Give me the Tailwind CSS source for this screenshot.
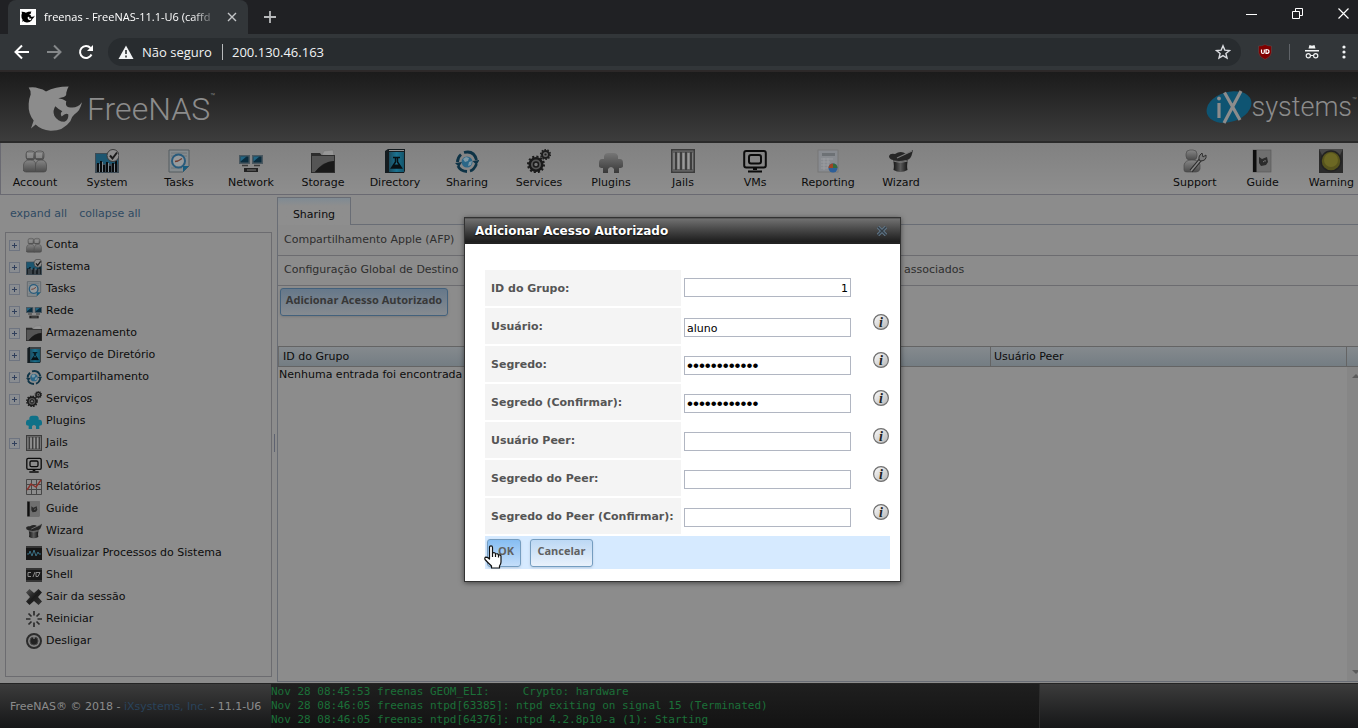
<!DOCTYPE html>
<html lang="pt-BR">
<head>
<meta charset="utf-8">
<title>freenas - FreeNAS-11.1-U6</title>
<script src="https://cdn.jsdelivr.net/npm/@tailwindcss/browser@4"></script>
</head>
<body class="h-screen overflow-hidden flex flex-col bg-[#8c8c8c] font-['DejaVu_Sans',sans-serif] text-[11px] leading-[14px] text-[#0c0c0c]">

<svg class="absolute size-0" aria-hidden="true">
  <defs>
    <linearGradient id="gs" x1="0" y1="0" x2="0" y2="1"><stop offset="0" stop-color="#868686"/><stop offset="1" stop-color="#4c4c4c"/></linearGradient>
    <linearGradient id="gd" x1="0" y1="0" x2="1" y2="1"><stop offset="0" stop-color="#555"/><stop offset=".5" stop-color="#1b1b1b"/><stop offset="1" stop-color="#333"/></linearGradient>
    <linearGradient id="gh" x1="0" y1="0" x2="1" y2="0"><stop offset="0" stop-color="#111"/><stop offset=".5" stop-color="#5a5a5a"/><stop offset="1" stop-color="#111"/></linearGradient>
    <linearGradient id="gb" x1="0" y1="0" x2="1" y2="0"><stop offset="0" stop-color="#1c4a5c"/><stop offset=".5" stop-color="#1b7290"/><stop offset="1" stop-color="#12556c"/></linearGradient>
    <linearGradient id="gi" x1="0" y1="0" x2="1" y2="1"><stop offset="0" stop-color="#fff"/><stop offset="1" stop-color="#b4b4b4"/></linearGradient>
    <linearGradient id="gp" x1="0" y1="0" x2="0" y2="1"><stop offset="0" stop-color="#767676"/><stop offset="1" stop-color="#383838"/></linearGradient>
    <symbol id="shark" viewBox="0 0 168 140">
      <path fill-rule="evenodd" d="M5 7Q22 4 36 10Q48 12 57 19Q84 4 125 4Q120 12 118 22Q119 36 104 37L94 39L107 42L118 48Q113 62 125 66Q150 72 165 51Q160 76 142 88Q134 94 130 108Q108 138 70 137Q42 134 26 118L12 130L20 106Q3 86 5 56Q6 40 11 28Q12 16 5 7ZM85 63Q76 76 82 92Q92 110 112 110Q125 106 124 88Q117 82 104 94Q98 84 106 78Q94 72 85 63Z"/>
    </symbol>
    <symbol id="account" viewBox="0 0 24 24">
      <g fill="url(#gs)" stroke="#4c4c4c" stroke-width=".7"><rect x="3" y="2" width="9" height="9" rx="3"/><rect x="12" y="2" width="9" height="9" rx="3"/><path d="M.5 22V16Q1 11 7 11T12.500 16V23H3Q.5 23 .5 21Z"/><path d="M12.500 23V16Q13 11 18 11T23.500 16V20Q23.500 23 21 23Z"/></g>
      <path d="M4 4h6v5H4zM13 4h6v5h-6z" fill="#a0a0a0" opacity=".6"/>
    </symbol>
    <symbol id="system" viewBox="0 0 24 24">
      <rect y="4" width="24" height="20" fill="#3e4b54"/><rect x="1" y="5" width="22" height="10" fill="#1c5670"/>
      <path d="M2 23V14h2v9M5 23V12h2v11M8 23V16h2v7M11 23V13h2v10M14 23V17h2v6M17 23V14h2v9M20 23V12h2v11" fill="#090c0e"/>
      <path d="M4 23V15h1v8M7 23V13h1v10M13 23V14h1v9M19 23V15h1v8" fill="#7b8790"/>
      <circle cx="18" cy="6.500" r="6" fill="#8d8d8d" stroke="#3a3a3a"/><path d="M15 6.500l2.500 3L22 3.500" fill="none" stroke="#1b1b1b" stroke-width="2"/>
    </symbol>
    <symbol id="tasks" viewBox="0 0 24 24">
      <path d="M2 1h20v16l-6 6H2z" fill="#858b8e" stroke="#555c60"/><path d="M4 4h16M4 7h16M4 19h11" stroke="#6d7478"/>
      <circle cx="11.500" cy="12" r="6.500" fill="#969a9c" stroke="#295b7c" stroke-width="2"/><path d="M11 12l4-2.500M11 12l-3 .5" stroke="#703c30" stroke-width="1.400"/><path d="M16 23v-6h6z" fill="#165d80"/>
    </symbol>
    <symbol id="network" viewBox="0 0 24 24">
      <path d="M0 6h11v9H0zM13 6h11v9H13z" fill="#4b5860"/><path d="M1.500 7.500h8v6h-8zM14.500 7.500h8v6h-8z" fill="#0a2c3e"/><path d="M1.500 7.500h6l-6 5zM14.500 7.500h6l-6 5z" fill="#226482"/>
      <path d="M3 16.500h6M15 16.500h6" stroke="#3a3a3a" stroke-width="1.500"/><rect x="5" y="19" width="14" height="4" fill="#222"/><path d="M8 21h9" stroke="#777"/>
    </symbol>
    <symbol id="storage" viewBox="0 0 24 24">
      <path d="M11 6L13 2l9-1 1 6z" fill="#979797" stroke="#777" stroke-width=".5"/><path d="M0 4h9l1.500 2H24v18H0z" fill="#2d2d2d"/><path d="M1 7h22v5Q12 12 4 23H1z" fill="#555"/><path d="M4 23Q12 13 23 12v11z" fill="#191919"/>
    </symbol>
    <symbol id="directory" viewBox="0 0 24 24">
      <path d="M2 2L5 0h17v22l-1 2H2z" fill="#141c20"/><rect x="6" y="3" width="15" height="20" fill="url(#gb)"/><path d="M6 1.500h15" stroke="#8f8f8f"/>
      <path d="M10 8.500h7M12.500 9v4l-4 6h10l-4-6V9" fill="none" stroke="#071014" stroke-width="1.500"/><path d="M11 15.500h5l2 3.500H9z" fill="#071014"/>
    </symbol>
    <symbol id="sharing" viewBox="0 0 24 24">
      <circle cx="12" cy="13" r="5.500" fill="#2b6788"/><path d="M8 10l3-2 3 1-1 3-3 1zM14 13l3-1-1 4-3 1z" fill="#7c98a6"/>
      <path d="M2.500 13A10 10 0 0 1 6 5.500M9 3.500Q19 1 21.500 11M21.500 15Q19 21 15 22M12 22.500Q5 22 3 17" fill="none" stroke="#0e3346" stroke-width="2.800"/><path d="M0 14l7-1-3 5zM24.500 11l-7 1 4 4z" fill="#0e3346"/>
    </symbol>
    <symbol id="services" viewBox="0 0 24 24">
      <circle cx="9" cy="15.500" r="6.300" fill="#555" stroke="#1a1a1a" stroke-width="2.500"/><circle cx="9" cy="15.500" r="8" fill="none" stroke="#1a1a1a" stroke-width="2" stroke-dasharray="2.100 2.100"/><circle cx="9" cy="15.500" r="2.500" fill="#777" stroke="#1a1a1a" stroke-width="1.500"/>
      <circle cx="18.500" cy="5.500" r="3.500" fill="#666" stroke="#1e1e1e" stroke-width="2"/><circle cx="18.500" cy="5.500" r="4.800" fill="none" stroke="#1e1e1e" stroke-width="1.600" stroke-dasharray="1.500 1.500"/><circle cx="18.500" cy="5.500" r="1.100" fill="#1e1e1e"/>
    </symbol>
    <symbol id="plugins" viewBox="0 0 24 24">
      <path d="M5 10V7Q6 4 9 4h6q3 0 4 3v3h2q3 0 3 4v3q0 2-4 2v5h-5v-4q-3-4-6 0v4H4v-5q-4 0-4-2v-3q0-4 3-4z" fill="currentColor"/>
    </symbol>
    <symbol id="plugins-gray" viewBox="0 0 24 24">
      <path d="M5 10V7Q6 4 9 4h6q3 0 4 3v3h2q3 0 3 4v3q0 2-4 2v5h-5v-4q-3-4-6 0v4H4v-5q-4 0-4-2v-3q0-4 3-4z" fill="url(#gp)"/>
    </symbol>
    <symbol id="jails" viewBox="0 0 24 24">
      <rect x=".8" y=".8" width="22.400" height="22.400" fill="#7c7c7c" stroke="#3c3c3c" stroke-width="1.600"/><path d="M2 3h20M2 21h20" stroke="#555" stroke-width="1.500"/>
      <path d="M5 3v18M10 3v18M15 3v18M20 3v18" stroke="#3e3e3e" stroke-width="2"/><path d="M7.500 4v16M12.500 4v16M17.500 4v16" stroke="#9a9a9a" stroke-width="1.500"/>
    </symbol>
    <symbol id="vms" viewBox="0 0 24 24">
      <g fill="none" stroke="#0b0b0b" stroke-width="2"><rect x="1.200" y="2" width="21.600" height="16.500" rx="2"/><rect x="6" y="6" width="12" height="8.500" rx="2"/><path d="M10 20h4M5 22.500h14"/></g>
    </symbol>
    <symbol id="reporting" viewBox="0 0 24 24">
      <rect x="2" y="1" width="20" height="22" fill="#888b90" stroke="#777"/><rect x="6" y="4" width="13" height="3" fill="#6d7175"/><path d="M5 10h12M5 13h9M5 16h8M5 19h7M8 9v12M12 9v10" stroke="#9a9ca0"/>
      <circle cx="17" cy="19" r="4.500" fill="#2d5f99"/><path d="M17 19v-4.500a4.500 4.500 0 0 1 4.500 4.500z" fill="#356b3b"/><path d="M17 19h-4.500a4.500 4.500 0 0 1 4.500-4.500z" fill="#9e4424"/>
    </symbol>
    <symbol id="wizard" viewBox="0 0 24 24">
      <path d="M0 7Q1 4 6 5Q12 1 17 5l7-4-1 4q-1 5-5 6-9 2-14 0Q0 10 0 7z" fill="#262626"/><path d="M4 11q1.500 5 .5 10 7 4 14 0-1-5 .5-10-7 3-15 0z" fill="url(#gh)"/><path d="M4 12q7 3 15 0" stroke="#777" fill="none"/><path d="M8 9L23 2" stroke="#7a7a7a" stroke-width="1.200"/>
    </symbol>
    <symbol id="support" viewBox="0 0 24 24">
      <g fill="url(#gs)" stroke="#4a4a4a" stroke-width=".7"><rect x="3" y="1" width="11" height="10" rx="4"/><path d="M1 21v-5q1-5 8-5t8 5v4q-1 3-4 3H4q-3 0-3-2z"/></g>
      <path d="M8 22L18 10" stroke="#2b2b2b" stroke-width="3.600"/><path d="M8 22L18 10" stroke="#888" stroke-width="1.600"/><path d="M17 12q-3-4 2-8l1 4 3-2q1 6-6 6z" fill="#777" stroke="#2e2e2e"/>
    </symbol>
    <symbol id="guide" viewBox="0 0 24 24">
      <rect x="2" y="1" width="18" height="22" fill="#6f6f6f" stroke="#555" stroke-width=".6"/><rect x="2" y="1" width="3.500" height="22" fill="#0e0e0e"/><path d="M8 8l3 2 5-2 1 5-2 3-5 1-2-3z" fill="#2b2b2b"/><path d="M12 13q2-2 3-1" stroke="#777" fill="none"/>
    </symbol>
    <symbol id="warning" viewBox="0 0 24 24">
      <rect width="24" height="24" fill="#2b2b2b"/><path d="M0 0h24L20 8H4z" fill="#484848"/><circle cx="12" cy="12" r="10" fill="#57541d" stroke="#222" stroke-width="1.500"/><circle cx="12" cy="11" r="7" fill="#6c6824"/>
    </symbol>
    <symbol id="chart" viewBox="0 0 16 16">
      <path d="M.5.500h15v15H.5zM5.500 0v16M10.500 0v16M0 5.500h16M0 10.500h16" fill="none" stroke="#474747"/><path d="M1 11l4-6 5 3 5-7" fill="none" stroke="#8b322b" stroke-width="1.400"/>
    </symbol>
    <symbol id="process" viewBox="0 0 16 16">
      <rect y="1" width="16" height="14" fill="#161616"/><path d="M0 2h16" stroke="#555"/><path d="M1 9h2l1-3 2 5 2-6 2 6 2-4 1 2h2" fill="none" stroke="#3b6f83"/>
    </symbol>
    <symbol id="shell" viewBox="0 0 16 16">
      <rect y="1" width="16" height="14" fill="#191919"/><path d="M0 2h16M0 14h16" stroke="#555"/><path d="M5 5.500H2v4h3M7 10l2-5M10 5.500h4l-2 4h-2z" fill="none" stroke="#8c8c8c"/>
    </symbol>
    <symbol id="logout" viewBox="0 0 16 16"><path d="M3.500 0L8 4 12.500 0 16 3.500 12 8 16 12.500 12.500 16 8 12 3.500 16 0 12.500 4 8 0 3.500z" fill="url(#gd)"/></symbol>
    <symbol id="reboot" viewBox="0 0 16 16"><path d="M8 0v4.500M8 11.500V16M0 8h4.500M11.500 8H16M2.500 2.500l3 3M10.500 10.500l3 3M2.500 13.500l3-3M10.500 5.500l3-3" stroke="#2c2c2c" stroke-width="1.700"/></symbol>
    <symbol id="shutdown" viewBox="0 0 16 16"><circle cx="8" cy="8" r="7" fill="#808080" stroke="#2c2c2c" stroke-width="2"/><circle cx="8" cy="8" r="4" fill="#222" stroke="#444"/><path d="M8 3v3" stroke="#999"/></symbol>
    <symbol id="info" viewBox="0 0 16 16"><circle cx="8" cy="8" r="7.400" fill="url(#gi)" stroke="#707070" stroke-width="1.200"/><text x="8" y="12.500" text-anchor="middle" font-family="Liberation Serif, serif" font-weight="bold" font-style="italic" font-size="14" fill="#222">i</text></symbol>
    <symbol id="plus" viewBox="0 0 11 11"><rect x=".5" y=".5" width="10" height="10" fill="#8a8d91" stroke="#6e7480"/><path d="M3 5.500h5M5.500 3v5" stroke="#303f5b"/></symbol>
  </defs>
</svg>

<!-- Browser window frame -->
<div class="shrink-0 h-[34px] bg-[#202124] flex items-start pl-2 font-['Open_Sans',sans-serif] text-white">
  <div class="w-60 h-[34px] bg-[#323639] rounded-t-lg flex items-center pl-3 pr-2.5">
    <svg class="size-4 bg-white p-px shrink-0" fill="#000"><use href="#shark"/></svg>
    <span class="ml-2 flex-1 overflow-hidden whitespace-nowrap text-[11px] mask-r-from-85%">freenas - FreeNAS-11.1-U6 (caffd</span>
    <button aria-label="Fechar guia" class="ml-2 size-3"><svg viewBox="0 0 12 12" class="size-3" stroke="#c4c6c8" stroke-width="1.400"><path d="M2 2l8 8M10 2l-8 8"/></svg></button>
  </div>
  <button aria-label="Nova guia" class="ml-4 mt-[11px] size-3"><svg viewBox="0 0 12 12" class="size-3" stroke="#b8babc" stroke-width="1.800"><path d="M6 0v12M0 6h12"/></svg></button>
  <div class="ml-auto flex gap-[35px] mt-2 pr-[9px]">
    <button aria-label="Minimizar" class="size-[11px]"><svg viewBox="0 0 11 11" class="size-[11px]" stroke="#fff"><path d="M0 6.500h11"/></svg></button>
    <button aria-label="Restaurar" class="size-[11px]"><svg viewBox="0 0 11 11" class="size-[11px]" stroke="#fff" fill="none"><path d="M.5 3.500h7v7h-7zM3.500 3V.5h7v7H8"/></svg></button>
    <button aria-label="Fechar" class="size-[11px]"><svg viewBox="0 0 11 11" class="size-[11px]" stroke="#fff" stroke-width="1.200"><path d="M.5.500l10 10M10.500.500l-10 10"/></svg></button>
  </div>
</div>
<div class="shrink-0 h-9 bg-[#323639] flex items-center pl-3.5 font-['Open_Sans',sans-serif] text-[13px] leading-5 text-[#f1f3f4]">
  <button aria-label="Voltar" class="size-4"><svg viewBox="0 0 16 16" class="size-4" fill="none" stroke="#fff" stroke-width="2"><path d="M15 8H2M8 1.500L1.500 8 8 14.500"/></svg></button>
  <button aria-label="Avançar" class="size-4 ml-4"><svg viewBox="0 0 16 16" class="size-4" fill="none" stroke="#85888a" stroke-width="2"><path d="M1 8h13M8 1.500L14.500 8 8 14.500"/></svg></button>
  <button aria-label="Recarregar" class="size-4 ml-4"><svg viewBox="0 0 16 16" class="size-4" fill="none" stroke="#fff" stroke-width="2"><path d="M13.500 10.500A6 6 0 1 1 12.500 4"/><path d="M15 1v6H9z" fill="#fff" stroke="none"/></svg></button>
  <div class="ml-3.5 flex-1 h-7 rounded-full bg-[#282c2f] flex items-center pl-2.5 pr-2.5">
    <svg viewBox="0 0 16 16" class="size-4"><path d="M8 1.500L15.500 15H.5z" fill="#f1f3f4"/><path d="M8 6v4M8 11.500v2" stroke="#282c2f" stroke-width="1.600"/></svg>
    <span class="ml-2 w-[72px] whitespace-nowrap">Não seguro</span>
    <span class="ml-2 h-4 w-px bg-[#b8babc]"></span>
    <input aria-label="Endereço" class="ml-[9px] flex-1 bg-transparent outline-none" value="200.130.46.163">
    <svg viewBox="0 0 16 16" class="size-4" fill="none" stroke="#dadce0" stroke-width="1.400"><path d="M8 1.800l1.800 4.300 4.700.4-3.600 3 1.100 4.500L8 11.600 4 14l1.100-4.500-3.600-3 4.700-.4z"/></svg>
  </div>
  <svg viewBox="0 0 16 16" class="ml-4 size-4"><path d="M8 .5Q11 2 14.500 2v6.500Q14 13 8 15.500 2 13 1.500 8.500V2Q5 2 8 .5z" fill="#800000" stroke="#555" stroke-width=".5"/><path d="M4.500 5.500V8q0 1.500 1.400 1.500T7.300 8V5.500M9 5.500V9.500q3 0 3-2t-3-2z" fill="none" stroke="#fff" stroke-width="1.200"/></svg>
  <span class="ml-4 h-4 w-px bg-[#5f6368]"></span>
  <svg viewBox="0 0 16 16" class="ml-3.5 size-4"><path d="M4.500 4.500L5.500 1 8 1.800 10.500 1l1 3.500zM1 6h14v1.400H1z" fill="#f1f3f4"/><path d="M6.300 11.500h3.400" stroke="#f1f3f4"/><g fill="none" stroke="#f1f3f4" stroke-width="1.200"><circle cx="4.300" cy="11.800" r="2.100"/><circle cx="11.700" cy="11.800" r="2.100"/></g></svg>
  <svg viewBox="0 0 16 16" class="ml-4 mr-[6px] size-4" fill="#f1f3f4"><circle cx="8" cy="3" r="1.600"/><circle cx="8" cy="8" r="1.600"/><circle cx="8" cy="13" r="1.600"/></svg>
</div>

<div class="relative flex-1 min-h-0 flex flex-col border-t-2 border-[#2c2828]">
  <!-- Product banner -->
  <header class="shrink-0 h-[71px] flex items-center justify-between pl-[27px] pr-px bg-linear-to-b from-[#1b1b1b] to-[#3d3d3d] border-b-2 border-b-[#2a2a2a] font-['Roboto',sans-serif] font-light text-[#8c8c8c]">
    <div class="flex items-center">
      <svg class="w-14 h-[47px] mt-1" fill="#8c8c8c"><use href="#shark"/></svg>
      <span class="ml-1 mt-1 text-[32px] leading-9">FreeNAS</span><sup class="text-[8px] leading-3 -mt-3">™</sup>
    </div>
    <div class="flex items-center">
      <svg viewBox="0 0 46 36" class="w-[46px] h-9"><ellipse cx="23" cy="18" rx="23" ry="15" transform="rotate(-17 23 18)" fill="#0e5472"/><path d="M13 14V29M18.500 3.500L34 31M35 2L18 34" fill="none" stroke="#8c8c8c" stroke-width="3.200"/><circle cx="13" cy="9.500" r="1.900" fill="#8c8c8c"/></svg>
      <span class="text-[27px] leading-9">systems</span><sup class="text-[8px] leading-3 -mt-1">™</sup>
    </div>
  </header>

  <!-- Main toolbar -->
  <nav class="shrink-0 h-[52px] flex justify-between border-l border-b border-[#6a6a72] bg-linear-to-b from-[#818181] to-[#8e8e8e] pt-1.5 pr-1">
    <div class="flex -ml-0.5 *:flex *:flex-col *:items-center *:gap-[3px] *:w-18">
      <a href="#"><svg class="size-6"><use href="#account"/></svg>Account</a>
      <a href="#"><svg class="size-6"><use href="#system"/></svg>System</a>
      <a href="#"><svg class="size-6"><use href="#tasks"/></svg>Tasks</a>
      <a href="#"><svg class="size-6"><use href="#network"/></svg>Network</a>
      <a href="#"><svg class="size-6"><use href="#storage"/></svg>Storage</a>
      <a href="#"><svg class="size-6"><use href="#directory"/></svg>Directory</a>
      <a href="#"><svg class="size-6"><use href="#sharing"/></svg>Sharing</a>
      <a href="#"><svg class="size-6"><use href="#services"/></svg>Services</a>
      <a href="#"><svg class="size-6"><use href="#plugins-gray"/></svg>Plugins</a>
      <a href="#"><svg class="size-6"><use href="#jails"/></svg>Jails</a>
      <a href="#"><svg class="size-6"><use href="#vms"/></svg>VMs</a>
      <a href="#" class="mx-px"><svg class="size-6"><use href="#reporting"/></svg>Reporting</a>
      <a href="#"><svg class="size-6"><use href="#wizard"/></svg>Wizard</a>
    </div>
    <div class="flex gap-[30px] *:flex *:flex-col *:items-center *:gap-[3px]">
      <a href="#"><svg class="size-6"><use href="#support"/></svg>Support</a>
      <a href="#"><svg class="size-6"><use href="#guide"/></svg>Guide</a>
      <a href="#"><svg class="size-6"><use href="#warning"/></svg>Warning</a>
    </div>
  </nav>

  <div class="flex-1 min-h-0 flex">
    <!-- Navigation tree -->
    <aside class="w-[272px] shrink-0 flex flex-col pl-[5px] pb-1.5">
      <div class="pl-[5px] pt-3 pb-[11px] flex gap-3 text-[#2f4a62]"><a href="#">expand all</a><a href="#">collapse all</a></div>
      <ul class="flex-1 border border-[#6c6c70] *:flex *:items-center *:h-[22px] *:pl-[3px] *:pt-0.5">
        <li><button aria-label="Expandir Conta" class="size-[11px] mr-1.5"><svg class="size-[11px]"><use href="#plus"/></svg></button><svg class="size-4 mr-1"><use href="#account"/></svg>Conta</li>
        <li><button aria-label="Expandir Sistema" class="size-[11px] mr-1.5"><svg class="size-[11px]"><use href="#plus"/></svg></button><svg class="size-4 mr-1"><use href="#system"/></svg>Sistema</li>
        <li><button aria-label="Expandir Tasks" class="size-[11px] mr-1.5"><svg class="size-[11px]"><use href="#plus"/></svg></button><svg class="size-4 mr-1"><use href="#tasks"/></svg>Tasks</li>
        <li><button aria-label="Expandir Rede" class="size-[11px] mr-1.5"><svg class="size-[11px]"><use href="#plus"/></svg></button><svg class="size-4 mr-1"><use href="#network"/></svg>Rede</li>
        <li><button aria-label="Expandir Armazenamento" class="size-[11px] mr-1.5"><svg class="size-[11px]"><use href="#plus"/></svg></button><svg class="size-4 mr-1"><use href="#storage"/></svg>Armazenamento</li>
        <li><button aria-label="Expandir Serviço de Diretório" class="size-[11px] mr-1.5"><svg class="size-[11px]"><use href="#plus"/></svg></button><svg class="size-4 mr-1"><use href="#directory"/></svg>Serviço de Diretório</li>
        <li><button aria-label="Expandir Compartilhamento" class="size-[11px] mr-1.5"><svg class="size-[11px]"><use href="#plus"/></svg></button><svg class="size-4 mr-1"><use href="#sharing"/></svg>Compartilhamento</li>
        <li><button aria-label="Expandir Serviços" class="size-[11px] mr-1.5"><svg class="size-[11px]"><use href="#plus"/></svg></button><svg class="size-4 mr-1"><use href="#services"/></svg>Serviços</li>
        <li><svg class="size-4 mr-1 ml-[17px] text-[#0f7188]"><use href="#plugins"/></svg>Plugins</li>
        <li><button aria-label="Expandir Jails" class="size-[11px] mr-1.5"><svg class="size-[11px]"><use href="#plus"/></svg></button><svg class="size-4 mr-1"><use href="#jails"/></svg>Jails</li>
        <li><svg class="size-4 mr-1 ml-[17px]"><use href="#vms"/></svg>VMs</li>
        <li><svg class="size-4 mr-1 ml-[17px]"><use href="#chart"/></svg>Relatórios</li>
        <li><svg class="size-4 mr-1 ml-[17px]"><use href="#guide"/></svg>Guide</li>
        <li><svg class="size-4 mr-1 ml-[17px]"><use href="#wizard"/></svg>Wizard</li>
        <li><svg class="size-4 mr-1 ml-[17px]"><use href="#process"/></svg>Visualizar Processos do Sistema</li>
        <li><svg class="size-4 mr-1 ml-[17px]"><use href="#shell"/></svg>Shell</li>
        <li><svg class="size-4 mr-1 ml-[17px]"><use href="#logout"/></svg>Sair da sessão</li>
        <li><svg class="size-4 mr-1 ml-[17px]"><use href="#reboot"/></svg>Reiniciar</li>
        <li><svg class="size-4 mr-1 ml-[17px]"><use href="#shutdown"/></svg>Desligar</li>
      </ul>
    </aside>
    <div class="w-[5px] shrink-0 flex items-center justify-center pt-2"><span class="w-px h-[18px] bg-[#5e6270]"></span></div>

    <!-- Sharing workspace -->
    <main class="flex-1 min-w-0 flex flex-col pt-0.5 pb-px">
      <div class="flex shrink-0 h-7">
        <div class="w-[74px] border border-b-0 border-[#696d75] bg-linear-to-b from-[#7f8a93] to-[#8e8e8e] to-30% text-center pt-2.5">Sharing</div>
        <div class="flex-1 border-b border-[#696d75]"></div>
      </div>
      <div class="flex-1 flex flex-col border-l border-b border-[#696d75]">
        <div class="h-[31px] shrink-0 border-b border-[#6c6c70] pl-1.5 pt-2 text-[#2e2e2e]">Compartilhamento Apple (AFP)</div>
        <div class="h-[30px] shrink-0 border-b border-[#6c6c70] pl-1.5 pt-[7px] text-[#2e2e2e] flex"><span class="w-[620px] shrink-0">Configuração Global de Destino</span><span>associados</span></div>
        <div class="shrink-0 pl-0.5 pt-0.5 h-[60px]">
          <button class="h-7 w-[168px] border border-[#43617c] rounded-[3px] bg-linear-to-b from-[#66788a] to-[#868b90] font-['Open_Sans',sans-serif] font-bold text-[11px] text-[#383838] shadow-sm pb-1 whitespace-nowrap">Adicionar Acesso Autorizado</button>
        </div>
        <div class="shrink-0 h-[21px] flex bg-linear-to-b from-[#858a8e] to-[#747d83] border-t border-b border-[#646464] leading-5">
          <div class="w-[712px] pl-1 border-l border-[#6a6a6a]">ID do Grupo</div>
          <div class="flex-1 pl-[3px] border-l border-r border-[#646464]">Usuário Peer</div>
          <div class="w-[11px]"></div>
        </div>
        <div class="flex-1 flex justify-between">
          <div class="leading-[15px] pl-px">Nenhuma entrada foi encontrada</div>
          <div class="w-[11px] bg-[#868686] flex flex-col justify-between items-end py-[7px] overflow-hidden">
            <svg viewBox="0 0 6 4" class="w-1.5 h-1"><path d="M0 4L4 0l2 2v2z" fill="#5c5c5c"/></svg>
            <svg viewBox="0 0 6 4" class="w-1.5 h-1"><path d="M0 0l4 4 2-2V0z" fill="#5c5c5c"/></svg>
          </div>
        </div>
      </div>
    </main>
  </div>

  <!-- Footer with console log -->
  <footer class="shrink-0 h-[45px] flex border-t border-[#242424] bg-linear-to-b from-[#3c3c3c] to-[#161718] text-[#8c8c8c]">
    <div class="w-[271px] shrink-0 whitespace-nowrap pl-2.5 pt-4">FreeNAS® © 2018 - <a href="#" class="text-[#29435c]">iXsystems, Inc.</a> - 11.1-U6</div>
    <pre class="w-[769px] h-full overflow-hidden bg-linear-to-b from-[#1f1f1f] to-[#131313] border-r border-[#2c2c2c] pt-px font-['DejaVu_Sans_Mono',monospace] text-[11px] leading-[14px] text-[#1b7038]">Nov 28 08:45:53 freenas GEOM_ELI:     Crypto: hardware
Nov 28 08:46:05 freenas ntpd[63385]: ntpd exiting on signal 15 (Terminated)
Nov 28 08:46:05 freenas ntpd[64376]: ntpd 4.2.8p10-a (1): Starting</pre>
  </footer>

  <!-- Dialog -->
  <section role="dialog" aria-labelledby="dlg" class="absolute left-[464px] top-[145px] w-[437px] bg-white border border-[#333] shadow-[0_1px_5px_rgba(0,0,0,0.5)]">
    <div class="h-[26px] flex items-center justify-between pl-2.5 pr-[13px] bg-linear-to-b from-[#707070] to-[#1d1d1d] border-t border-b-2 border-b-[#222] border-t-[#5a5a5a]">
      <h2 id="dlg" class="text-[12px] font-bold text-white text-shadow-[0_1px_2px_#000]">Adicionar Acesso Autorizado</h2>
      <button aria-label="Fechar diálogo" class="size-2.5"><svg viewBox="0 0 10 10" class="size-2.5" fill="none"><path d="M1 1l8 8M9 1l-8 8" stroke="#5f7688" stroke-width="3.400"/><path d="M1 1l8 8M9 1l-8 8" stroke="#333c44" stroke-width="1.400"/></svg></button>
    </div>
    <form class="pt-[26px] pl-5 pr-2.5 pb-3 text-black" onsubmit="return false">
      <div class="flex flex-col gap-0.5 *:flex *:h-9 *:pr-px">
        <div><label for="f1" class="w-[196px] mr-[3px] bg-[#f4f4f4] pl-1.5 leading-[37px] font-bold text-[#555] whitespace-nowrap">ID do Grupo:</label><input id="f1" value="1" class="mt-2 w-[167px] h-[19px] border border-[#b1b6c2] px-0.5 pt-px text-right outline-none"></div>
        <div><label for="f2" class="w-[196px] mr-[3px] bg-[#f4f4f4] pl-1.5 leading-[37px] font-bold text-[#555] whitespace-nowrap">Usuário:</label><input id="f2" value="aluno" class="mt-2.5 w-[167px] h-[19px] border border-[#b1b6c2] px-0.5 pt-px outline-none"><svg class="size-4 mt-1.5 ml-auto"><use href="#info"/></svg></div>
        <div><label for="f3" class="w-[196px] mr-[3px] bg-[#f4f4f4] pl-1.5 leading-[37px] font-bold text-[#555] whitespace-nowrap">Segredo:</label><input id="f3" type="password" value="senha1234567" class="mt-2.5 w-[167px] h-[19px] border border-[#b1b6c2] px-0.5 font-['Liberation_Sans',sans-serif] text-[17px] outline-none"><svg class="size-4 mt-1.5 ml-auto"><use href="#info"/></svg></div>
        <div><label for="f4" class="w-[196px] mr-[3px] bg-[#f4f4f4] pl-1.5 leading-[37px] font-bold text-[#555] whitespace-nowrap">Segredo (Confirmar):</label><input id="f4" type="password" value="senha1234567" class="mt-2.5 w-[167px] h-[19px] border border-[#b1b6c2] px-0.5 font-['Liberation_Sans',sans-serif] text-[17px] outline-none"><svg class="size-4 mt-1.5 ml-auto"><use href="#info"/></svg></div>
        <div><label for="f5" class="w-[196px] mr-[3px] bg-[#f4f4f4] pl-1.5 leading-[37px] font-bold text-[#555] whitespace-nowrap">Usuário Peer:</label><input id="f5" class="mt-2.5 w-[167px] h-[19px] border border-[#b1b6c2] px-0.5 outline-none"><svg class="size-4 mt-1.5 ml-auto"><use href="#info"/></svg></div>
        <div><label for="f6" class="w-[196px] mr-[3px] bg-[#f4f4f4] pl-1.5 leading-[37px] font-bold text-[#555] whitespace-nowrap">Segredo do Peer:</label><input id="f6" type="password" class="mt-2.5 w-[167px] h-[19px] border border-[#b1b6c2] px-0.5 outline-none"><svg class="size-4 mt-1.5 ml-auto"><use href="#info"/></svg></div>
        <div><label for="f7" class="w-[196px] mr-[3px] bg-[#f4f4f4] pl-1.5 leading-[37px] font-bold text-[#555] whitespace-nowrap">Segredo do Peer (Confirmar):</label><input id="f7" type="password" class="mt-2.5 w-[167px] h-[19px] border border-[#b1b6c2] px-0.5 outline-none"><svg class="size-4 mt-1.5 ml-auto"><use href="#info"/></svg></div>
      </div>
      <div class="relative mt-0.5 h-[33px] bg-[#d6eaff] flex items-start gap-[9px] pl-0.5 pt-[3px] font-['Open_Sans',sans-serif] text-[11px] font-bold text-[#606060]">
        <button class="h-7 w-[34px] pl-1 pb-1 border border-[#759dc0] rounded-[3px] bg-linear-to-b from-[#86bdf2] to-[#c4defa] shadow-sm">OK</button>
        <button class="h-7 w-[63px] pb-1 border border-[#759dc0] rounded-[3px] bg-linear-to-b from-[#bcd8f4] to-[#e9f1fb] shadow-sm">Cancelar</button>
        <svg viewBox="0 0 18 24" class="absolute -left-px top-[9px] w-[18px] h-6" fill="#fff" stroke="#111" stroke-width="1.200" stroke-linejoin="round"><path d="M5.500 14V2.500q0-1.700 1.500-1.700T8.500 2.500V8q2.500-1 3 1 2.500-.8 3 1 2.500-.5 2.500 1.500V17q0 2-1.500 4v2h-8v-2Q4 18 1 14.500.3 12.500 2 12.200 4 12.200 5.500 14z"/><path d="M8.500 8v4M11.500 9v3M14.500 10v2.500" fill="none"/></svg>
      </div>
    </form>
  </section>
</div>
</body>
</html>
